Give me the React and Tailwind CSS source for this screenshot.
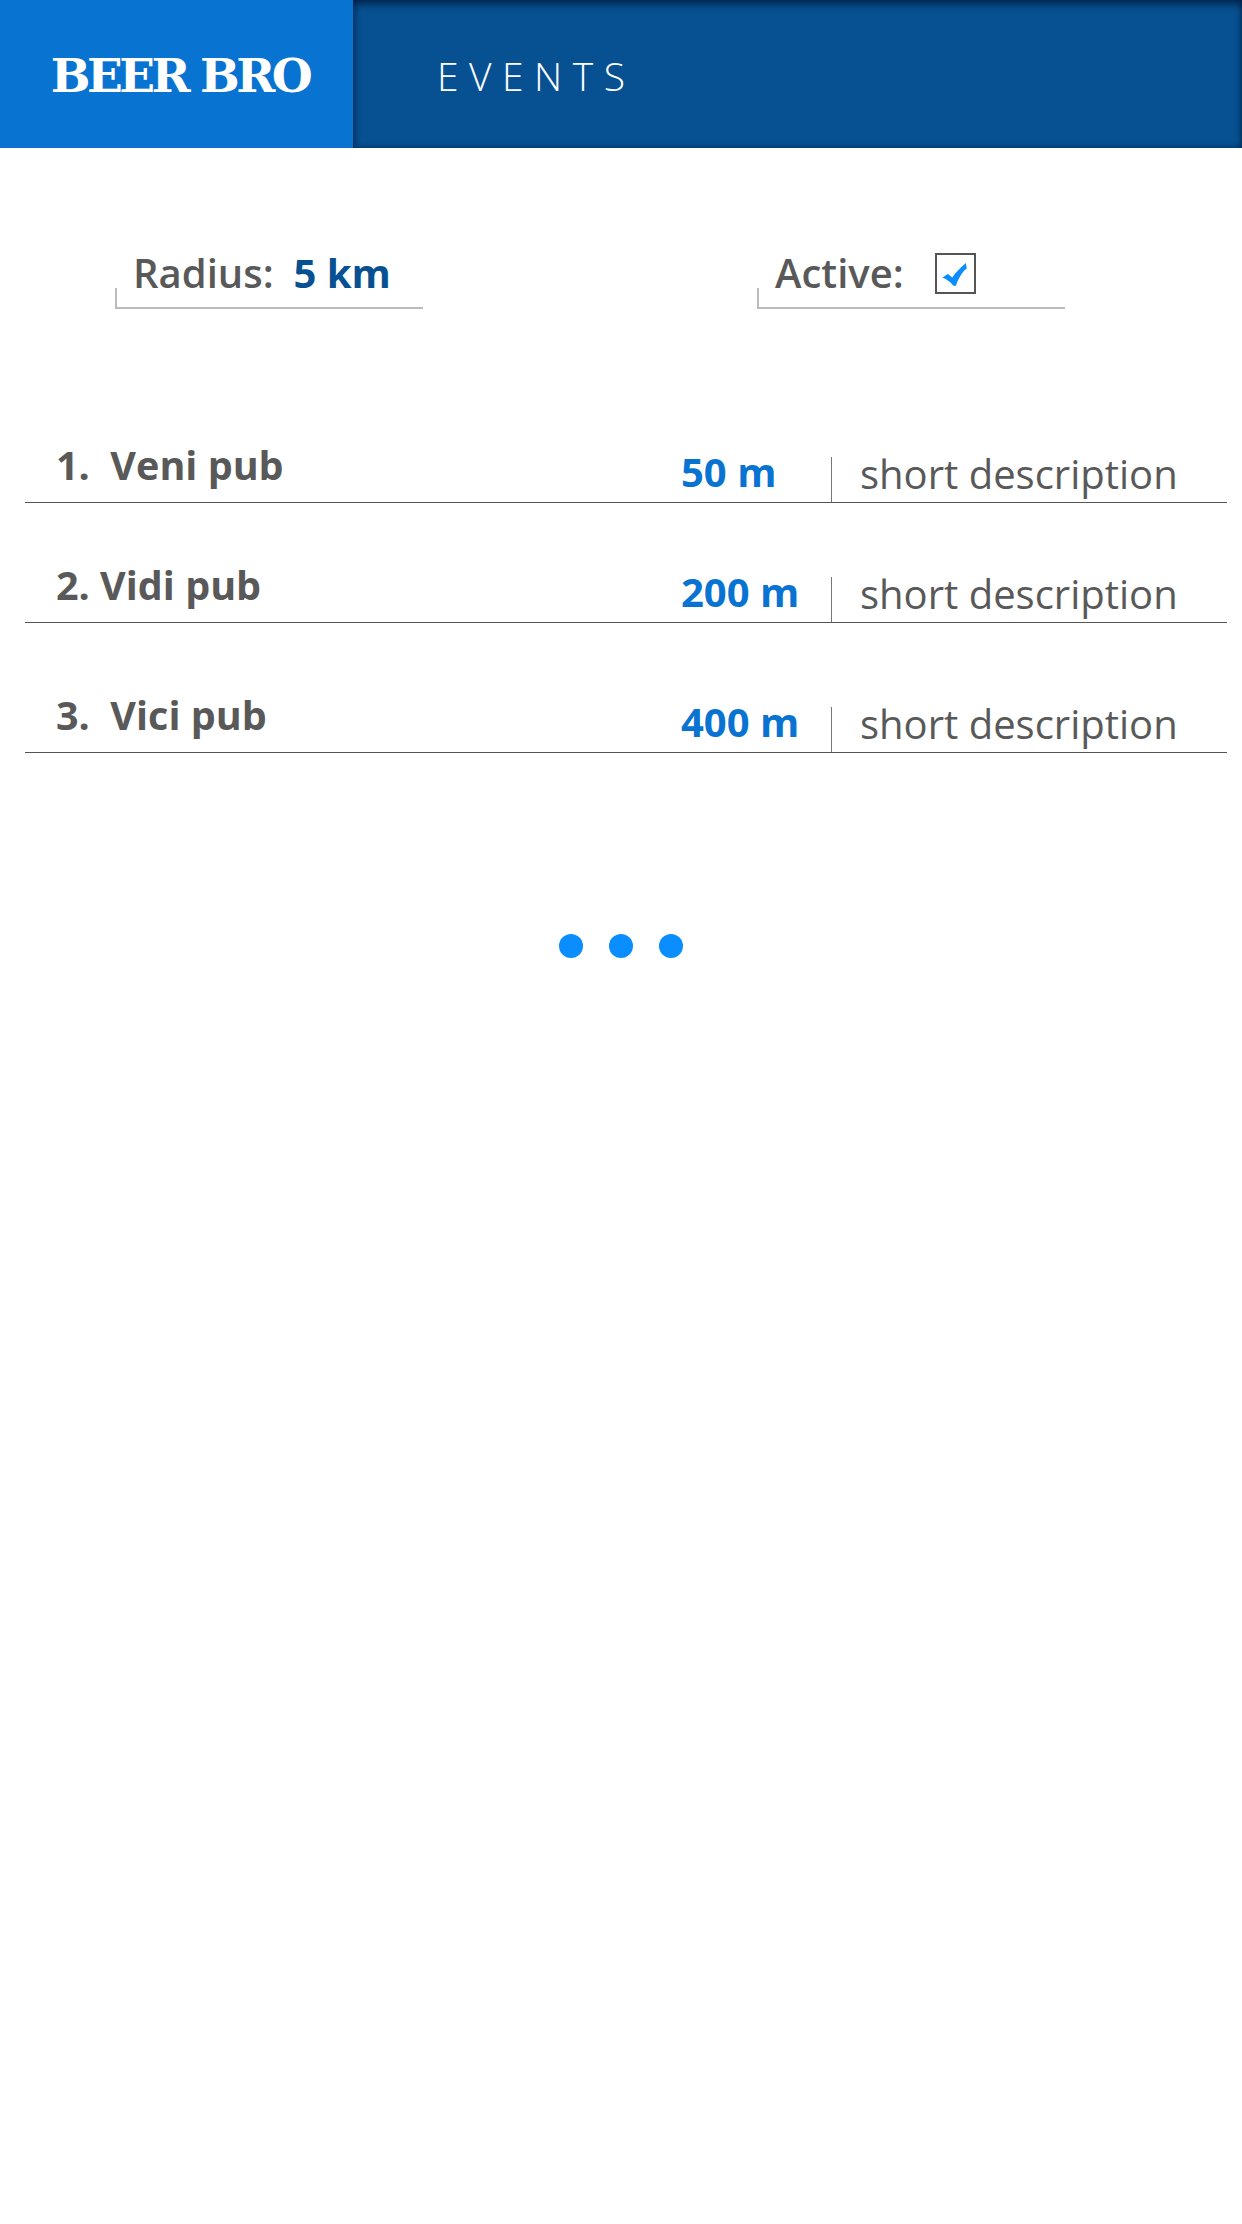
import React from "react";

const pubs = [
  { name: "1.  Veni pub", distance: "50 m", top: "mt-[0px]" },
  { name: "2. Vidi pub", distance: "200 m", top: "mt-[74px]" },
  { name: "3.  Vici pub", distance: "400 m", top: "mt-[84px]" },
];

const CheckMark = () => (
  <svg viewBox="0 0 41 41" className="w-[37px] h-[37px] shrink-0">
    <path d="M6 25 L12 21 L17 25 C21 19 26 14 32 9 L33 15 L30 17.5 C26 22 23 28 21 34 L18 34 C15 30 11 27 6 25 Z" fill="#0a8dff" />
  </svg>
);

const App = () => {
  return (
    <div className="min-h-[2224px] bg-white font-['Open_Sans',sans-serif] text-[#595959]">
      <header className="flex h-[148px] overflow-hidden bg-[#075192] shadow-[inset_0_6px_8px_-2px_rgba(0,20,50,0.75),inset_0_-3px_5px_-2px_rgba(0,20,50,0.35),inset_-3px_0_5px_-2px_rgba(0,20,50,0.35)]">
        <div className="flex w-[353px] items-center justify-center bg-[#0973d1] pl-[7px] pt-[5px] shadow-[3px_0_5px_rgba(0,20,50,0.45)] font-['DejaVu_Serif',serif] text-[47px] font-bold text-white">
          <span className="whitespace-nowrap tracking-[-3.5px]">BEER BRO</span>
        </div>
        <div className="flex items-center pl-[84px] pt-[4px] text-[39px] font-light tracking-[10.5px] text-white">
          EVENTS
        </div>
      </header>

      <section className="mt-[95px] flex pl-[115px]">
        <div className="relative flex h-[66px] w-[308px] items-center border-b-2 border-[#bbbbbb] pb-[4px] pl-[18px] text-[40px] font-semibold">
          <span className="absolute bottom-0 left-0 h-[19px] w-[2px] bg-[#bbbbbb]" />
          <span className="whitespace-pre">Radius:  </span>
          <span className="-ml-[1px] font-bold text-[#075192]">5 km</span>
        </div>
        <div className="relative ml-[334px] flex h-[66px] w-[308px] items-center border-b-2 border-[#bbbbbb] pb-[4px] pl-[18px] text-[40px] font-semibold">
          <span className="absolute bottom-0 left-0 h-[19px] w-[2px] bg-[#bbbbbb]" />
          <span>Active:</span>
          <span className="ml-[31px] flex h-[41px] w-[41px] items-center justify-center border-2 border-[#555555]">
            <CheckMark />
          </span>
        </div>
      </section>

      <section className="ml-[25px] mr-[15px] mt-[148px]">
        {pubs.map((pub) => (
          <div key={pub.name} className={`flex h-[46px] border-b border-[#555555] ${pub.top}`}>
            <div className="w-[656px] -translate-y-[17px] whitespace-pre pl-[31px] text-[39.5px] font-bold leading-[50px]">
              {pub.name}
            </div>
            <div className="w-[150px] -translate-y-[10px] text-[40px] font-bold leading-[50px] text-[#0973d1]">
              {pub.distance}
            </div>
            <div className="border-l border-[#777777] pl-[28px] text-[40px] leading-[34px]">
              short description
            </div>
          </div>
        ))}
      </section>

      <div className="mt-[181px] flex justify-center gap-[26px]">
        <span className="h-[24px] w-[24px] rounded-full bg-[#0a8dff]" />
        <span className="h-[24px] w-[24px] rounded-full bg-[#0a8dff]" />
        <span className="h-[24px] w-[24px] rounded-full bg-[#0a8dff]" />
      </div>
    </div>
  );
};

export default App;
